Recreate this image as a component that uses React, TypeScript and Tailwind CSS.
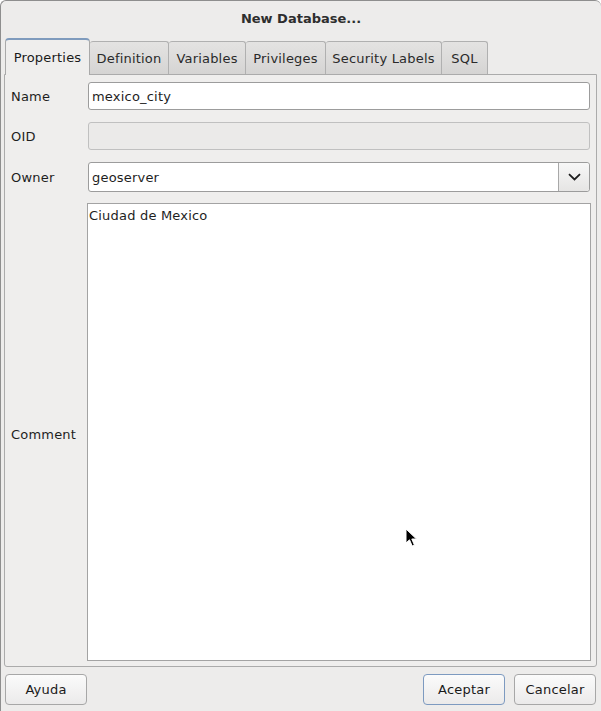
import React from 'react';

const tabs = ['Properties', 'Definition', 'Variables', 'Privileges', 'Security Labels', 'SQL'];
const tabWidths: Record<string, string> = {
  Properties: 'w-[85px]',
  Definition: 'w-[79px]',
  Variables: 'w-[77px]',
  Privileges: 'w-[80px]',
  'Security Labels': 'w-[116px]',
  SQL: 'w-[46px]',
};

function Tab({ label, active }: { label: string; active?: boolean }) {
  if (active) {
    return (
      <div
        className={`${tabWidths[label]} h-[37px] -mb-px relative z-10 flex items-center justify-center rounded-t-[4px] border border-b-0 border-[#a9a9a9] border-t-[#7f9bbd] border-t-2 bg-[#efeeed] text-[#1a1a1a]`}
      >
        <span>{label}</span>
      </div>
    );
  }
  return (
    <div
      className={`${tabWidths[label]} h-[33px] flex items-center justify-center rounded-t-[3px] border border-b-0 border-l-0 border-[#b0b0b0] bg-gradient-to-b from-[#e4e3e2] to-[#d5d4d3] text-[#2a2a2a]`}
    >
      <span className="pt-[1px]">{label}</span>
    </div>
  );
}

function Button({ label, primary }: { label: string; primary?: boolean }) {
  return (
    <div
      className={`w-[82px] h-[31px] flex items-center justify-center rounded-[4px] border bg-gradient-to-b from-[#fbfbfb] to-[#ebeaea] text-[#1a1a1a] pt-[1px] ${
        primary ? 'border-[#7d9ac0]' : 'border-[#a7a7a7]'
      }`}
    >
      {label}
    </div>
  );
}

export default function App() {
  return (
    <div
      className="relative w-[601px] h-[711px] bg-[#edeceb] text-[13px] tracking-[0.2px] text-[#1e1e1e] rounded-t-[6px] border-l border-t border-[#8e8e8e] overflow-hidden flex flex-col"
      style={{ fontFamily: '"DejaVu Sans", "Liberation Sans", sans-serif' }}
    >
      {/* title */}
      <div className="h-[36px] flex items-center justify-center font-bold text-[#2e2e2e] tracking-normal">
        New Database...
      </div>

      {/* tabs */}
      <div className="h-[37px] pl-[4px] flex items-end">
        <Tab label={tabs[0]} active />
        {tabs.slice(1).map((t) => (
          <Tab key={t} label={t} />
        ))}
      </div>

      {/* panel */}
      <div className="ml-[3px] w-[593px] h-[593px] border border-[#ababab] rounded-b-[3px] bg-[#efeeed] flex flex-col pt-[7px] pl-[6px] pr-[6px] pb-[5px]">
        <div className="flex items-center h-[28px]">
          <div className="w-[77px] pt-[2px]">Name</div>
          <div className="flex-1 h-[28px] border border-[#9c9c9c] rounded-[3px] bg-white flex items-center pl-[3px] pt-[2px]">
            mexico_city
          </div>
        </div>

        <div className="flex items-center h-[28px] mt-[12px]">
          <div className="w-[77px] pt-[2px]">OID</div>
          <div className="flex-1 h-[28px] border border-[#c0c0c0] rounded-[3px] bg-[#ebeae9]" />
        </div>

        <div className="flex items-center h-[30px] mt-[12px]">
          <div className="w-[77px] pt-[2px]">Owner</div>
          <div className="flex-1 h-[30px] border border-[#9c9c9c] rounded-[3px] bg-white flex items-stretch">
            <div className="flex-1 flex items-center pl-[3px] pt-[2px]">geoserver</div>
            <div className="w-[31px] border-l border-[#a8a8a8] rounded-r-[3px] bg-gradient-to-b from-[#f7f7f7] to-[#e6e5e4] flex items-center justify-center">
              <svg width="13" height="8" viewBox="0 0 13 8" fill="none">
                <path d="M1 1.2 L6.5 6.5 L12 1.2" stroke="#1e1e1e" strokeWidth="1.8" />
              </svg>
            </div>
          </div>
        </div>

        <div className="flex flex-1 mt-[11px]">
          <div className="w-[76px] flex items-center pt-[5px]">Comment</div>
          <div className="flex-1 -mr-px border border-[#a3a3a3] bg-white pl-[1px] pt-[2px]">
            Ciudad de Mexico
          </div>
        </div>
      </div>

      {/* buttons */}
      <div className="flex items-start pt-[7px] pl-[4px] pr-[5px]">
        <Button label="Ayuda" />
        <div className="flex-1" />
        <Button label="Aceptar" primary />
        <div className="w-[9px]" />
        <Button label="Cancelar" />
      </div>

      {/* mouse pointer */}
      <svg
        className="absolute left-[404px] top-[527px]"
        width="14"
        height="20"
        viewBox="0 0 14 20"
      >
        <path
          d="M1 1 L1 15 L4.5 11.8 L7.2 18 L9.4 17 L6.8 11 L11.5 11 Z"
          fill="#000"
          stroke="#fff"
          strokeWidth="1"
          strokeLinejoin="round"
        />
      </svg>
    </div>
  );
}
